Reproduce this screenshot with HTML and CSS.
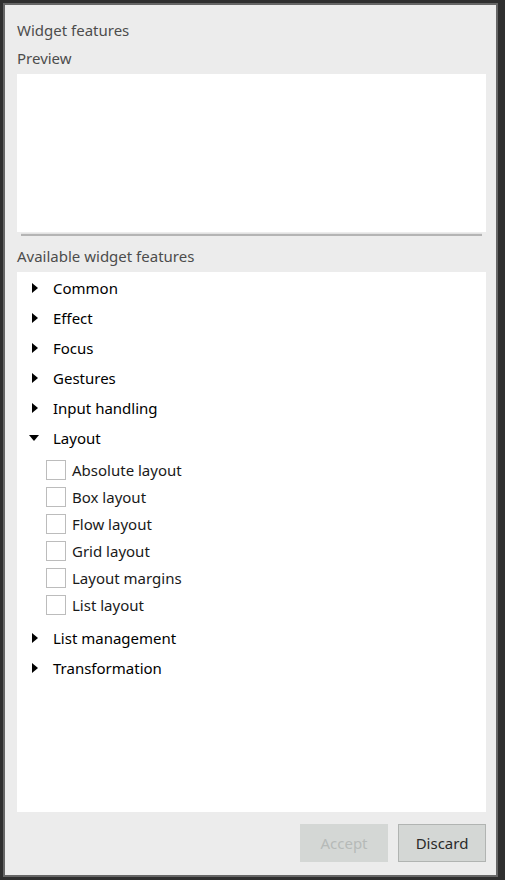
FILE: index.html
```html
<!DOCTYPE html>
<html>
<head>
<meta charset="utf-8">
<link rel="stylesheet" href="styles.css">
</head>
<body>
<div class="window">
  <div class="label title">Widget features</div>
  <div class="label preview-label">Preview</div>
  <div class="preview"></div>
  <div class="separator"></div>
  <div class="label avail-label">Available widget features</div>
  <div class="tree">
    <div class="row"><span class="tri right"></span><span class="txt">Common</span></div>
    <div class="row"><span class="tri right"></span><span class="txt">Effect</span></div>
    <div class="row"><span class="tri right"></span><span class="txt">Focus</span></div>
    <div class="row"><span class="tri right"></span><span class="txt">Gestures</span></div>
    <div class="row"><span class="tri right"></span><span class="txt">Input handling</span></div>
    <div class="row"><span class="tri down"></span><span class="txt">Layout</span></div>
    <div class="children">
      <div class="child"><span class="box"></span><span class="txt">Absolute layout</span></div>
      <div class="child"><span class="box"></span><span class="txt">Box layout</span></div>
      <div class="child"><span class="box"></span><span class="txt">Flow layout</span></div>
      <div class="child"><span class="box"></span><span class="txt">Grid layout</span></div>
      <div class="child"><span class="box"></span><span class="txt">Layout margins</span></div>
      <div class="child"><span class="box"></span><span class="txt">List layout</span></div>
    </div>
    <div class="row"><span class="tri right"></span><span class="txt">List management</span></div>
    <div class="row"><span class="tri right"></span><span class="txt">Transformation</span></div>
  </div>
  <div class="buttons">
    <button class="btn disabled">Accept</button>
    <button class="btn">Discard</button>
  </div>
</div>
</body>
</html>
```
FILE: styles.css
```css
html, body {
  margin: 0;
  padding: 0;
}
body {
  width: 505px;
  height: 880px;
  background: #2f2f2f;
  font-family: "Noto Sans", "Open Sans", sans-serif;
  font-size: 15px;
  overflow: hidden;
}
.window {
  margin: 3px 0 0 3px;
  width: 495px;
  height: 874px;
  border: 2px solid #666666;
  background: #ececec;
  padding: 15px 10px 0 12px;
  box-sizing: border-box;
  display: flex;
  flex-direction: column;
}
.label {
  height: 20px;
  line-height: 20px;
  color: #4c4c4c;
}
.preview-label {
  margin-top: 8px;
}
.preview {
  margin-top: 6px;
  height: 158px;
  background: #ffffff;
}
.separator {
  margin: 1px 4px 0 4px;
  height: 2px;
  border-top: 1px solid #e2e2e2;
  background: #b4b4b4;
}
.avail-label {
  margin-top: 10px;
}
.tree {
  margin-top: 6px;
  height: 540px;
  background: #ffffff;
  padding-top: 1px;
  box-sizing: border-box;
}
.row {
  height: 30px;
  display: flex;
  align-items: center;
  color: #000;
}
.tri {
  width: 36px;
  display: flex;
  justify-content: flex-start;
}
.tri.right::before {
  content: "";
  margin-left: 15px;
  border-left: 6px solid #000;
  border-top: 5px solid transparent;
  border-bottom: 5px solid transparent;
}
.tri.down::before {
  content: "";
  margin-left: 12px;
  border-top: 6px solid #000;
  border-left: 5.5px solid transparent;
  border-right: 5.5px solid transparent;
}
.children {
  padding: 3px 0 5px 0;
}
.child {
  height: 27px;
  display: flex;
  align-items: center;
  color: #1a1a1a;
}
.box {
  margin-left: 29px;
  width: 18px;
  height: 18px;
  border: 1px solid #bcbcbc;
  background: #fff;
  margin-right: 6px;
}
.buttons {
  margin-top: 12px;
  display: flex;
  justify-content: flex-end;
  gap: 10px;
}
.btn {
  width: 88px;
  height: 38px;
  font-family: inherit;
  font-size: 15px;
  background: #d4d7d5;
  border: 1px solid #b1b4b2;
  color: #2a2a2a;
  padding: 0;
}
.btn.disabled {
  border-color: #d4d7d5;
  color: #b6bab8;
}
```
